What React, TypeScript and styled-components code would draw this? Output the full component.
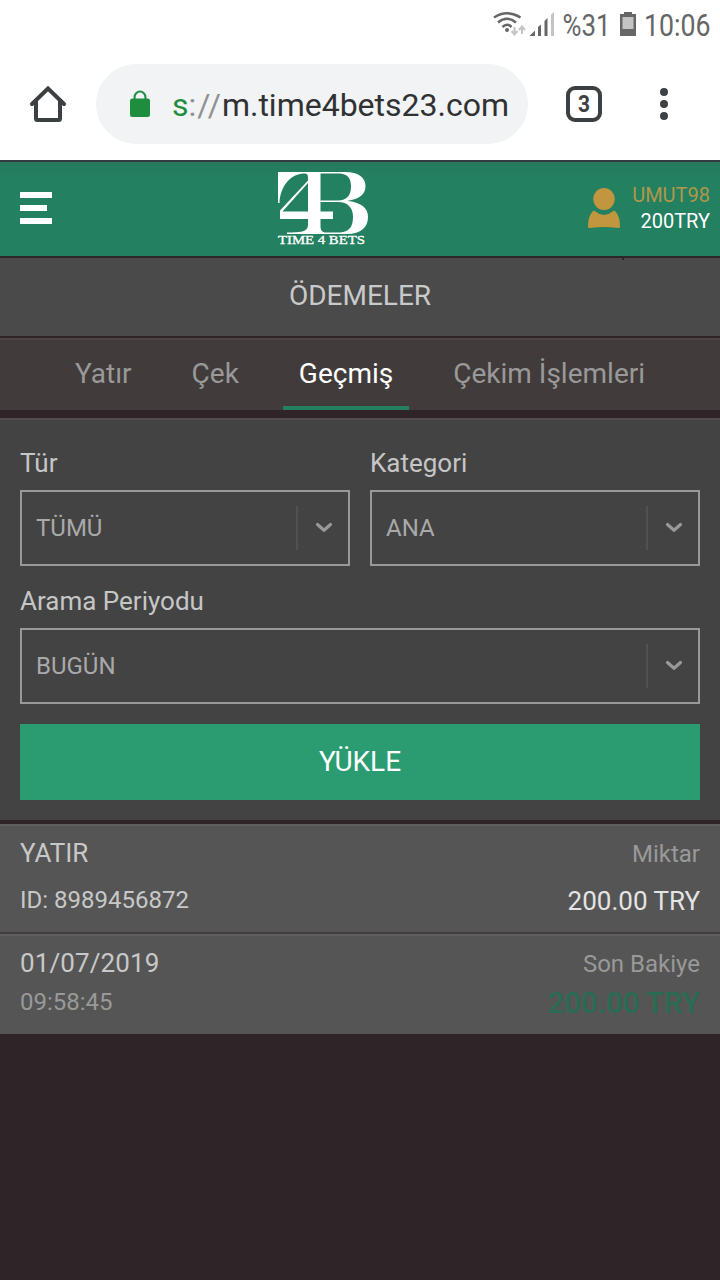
import React from 'react';
import styled, { createGlobalStyle } from 'styled-components';

const Global = createGlobalStyle`
  * { box-sizing: border-box; }
  body { margin: 0; background: #2f2529; font-family: Roboto, sans-serif; }
`;
const Screen = styled.div`width: 720px; height: 1280px; overflow: hidden; background: #2f2529;`;

const StatusBar = styled.div`
  height: 48px; background: #fff; color: #666;
  display: flex; justify-content: flex-end; padding-right: 10px;
  font-size: 31px; line-height: 50px;
`;
const StatusIcons = styled.svg`width: 62px; height: 48px; margin-right: 9px; flex: none;`;
const BatteryIcon = styled.svg`width: 16px; height: 48px; margin: 0 9px 0 10px; flex: none;`;
const Condensed = styled.svg<{ $w: number }>`width: ${p => p.$w}px; height: 48px; flex: none; overflow: visible;`;

const BrowserBar = styled.div`
  height: 112px; background: #fff; display: flex; align-items: center; padding: 0 0 0 28px;
`;
const HomeIcon = styled.svg`width: 40px; height: 40px; flex: none;`;
const UrlPill = styled.div`
  margin-left: 28px; width: 432px; height: 80px; border-radius: 40px; background: #f1f3f4;
  display: flex; align-items: center; padding-left: 34px; flex: none;
`;
const LockIcon = styled.svg`width: 20px; height: 28px; flex: none;`;
const UrlText = styled.div`
  margin-left: 22px; padding-top: 2px; font-size: 32px; line-height: 40px; color: #303133; white-space: pre;
`;
const Secure = styled.span`color: #1e8e3e;`;
const Scheme = styled.span`color: #8f9193; letter-spacing: 0.9px;`;
const TabCount = styled.div`
  margin-left: 38px; width: 36px; height: 36px; border: 4px solid #3c4043; border-radius: 9px;
  display: flex; align-items: center; justify-content: center; flex: none;
`;
const CountDigit = styled.svg`width: 14px; height: 20px; overflow: visible;`;
const MenuDots = styled.svg`width: 10px; height: 34px; margin-left: 57px; flex: none;`;

const Header = styled.header`
  height: 98px; border-top: 2px solid #353b42; border-bottom: 2px solid #2c282a;
  background: linear-gradient(#267a5d, #238061 16px);
  display: grid; grid-template-columns: 254px 100px 1fr; align-items: center; padding: 0 10px 2px 20px;
`;
const Burger = styled.div`display: flex; flex-direction: column; gap: 7px;`;
const BurgerLine = styled.div<{ $w: number }>`width: ${p => p.$w}px; height: 6px; background: #fff;`;
const Logo = styled.svg`width: 100px; height: 80px;`;
const User = styled.div`display: flex; justify-content: flex-end; align-items: center;`;
const UserIcon = styled.svg`width: 34px; height: 42px; margin-right: 11px;`;
const UserText = styled.div`text-align: right; font-size: 20px; line-height: 26px; color: #fff;`;
const UserName = styled.div`color: #b0974a;`;

const Title = styled.h1`
  margin: 0; height: 80px; background: #4a4a4a; border-bottom: 2px solid #2f2529; color: #c9c9c9;
  font-size: 28px; font-weight: 400; line-height: 75px; text-align: center; position: relative;
  &::before {
    content: ''; position: absolute; left: 622px; top: 0; width: 2px; height: 2px; background: #2c282a;
  }
`;
const Tabs = styled.nav`
  height: 72px; border-top: 2px solid #4b4645; background: #413c3b;
  display: flex; justify-content: center; gap: 28px;
`;
const Tab = styled.div<{ $active?: boolean }>`
  padding: 0 16px; font-size: 28px; line-height: 67px; height: 70px;
  color: ${p => (p.$active ? '#fff' : '#999')};
  border-bottom: ${p => (p.$active ? '4px solid #238061' : '0')};
`;

const Form = styled.section`
  margin-top: 8px; height: 402px; border-top: 2px solid #504c4d; background: #434343;
  padding: 26px 20px 0; display: flex; flex-direction: column;
`;
const FieldRow = styled.div`display: flex; gap: 20px; margin-bottom: 18px;`;
const Field = styled.div`flex: 1;`;
const Label = styled.div`font-size: 26px; line-height: 34px; height: 44px; color: #c6c6c6;`;
const Select = styled.div`
  height: 76px; border: 2px solid #999; display: flex; align-items: center;
  padding-left: 14px; color: #a9a9a9; font-size: 24px; line-height: 30px;
`;
const Value = styled.span`flex: 1;`;
const Divider = styled.span`width: 2px; height: 44px; background: #515151;`;
const Chevron = styled.svg`width: 50px; height: 40px;`;
const Submit = styled.div`
  height: 76px; margin-top: 2px; background: #2b9c72; color: #fff; font-size: 28px; line-height: 75px; text-align: center;
`;

const Record = styled.section`margin-top: 4px;`;
const RecordPart = styled.div<{ $h: number; $last?: boolean }>`
  height: ${p => p.$h}px; background: #555; border-top: 2px solid #5f5f5f;
  border-bottom: ${p => (p.$last ? '0' : '2px solid #413c3e')};
  padding: 10px 20px 0;
`;
const Line = styled.div<{ $h: number }>`
  display: flex; justify-content: space-between; align-items: center; height: ${p => p.$h}px;
`;
const Text = styled.span<{ $size: number; $color: string; $weight?: number; $spacing?: number }>`
  font-size: ${p => p.$size}px; color: ${p => p.$color}; font-weight: ${p => p.$weight ?? 400};
  letter-spacing: ${p => p.$spacing ?? 0}px; line-height: 34px;
  &:first-child { padding-bottom: 2px; }
`;

function SelectBox({ value }: { value: string }) {
  return (
    <Select>
      <Value>{value}</Value>
      <Divider />
      <Chevron viewBox="0 0 50 40" fill="none" stroke="#999" strokeWidth="3.2" strokeLinecap="round" strokeLinejoin="round">
        <path d="M19.5 16.5 L26 22.3 L32.5 16.5" />
      </Chevron>
    </Select>
  );
}

export default function App() {
  return (
    <Screen>
      <Global />
      <StatusBar>
        <StatusIcons viewBox="493 0 62 48">
          <g fill="none" stroke="#666" strokeWidth="2.5">
            <path d="M494 17.5 Q507 9 520.5 17.5" />
            <path d="M498 22.5 Q507 15 516 22.5" />
            <path d="M502.5 27 Q507 22.5 511.5 27" />
          </g>
          <circle cx="507" cy="30" r="2" fill="#666" />
          <g stroke="#c4c4c4" strokeWidth="2" fill="none">
            <path d="M514.5 27 V34 M511.5 31 L514.5 34.5 L517.5 31" />
            <path d="M522 34 V27 M519 30 L522 26.5 L525 30" />
          </g>
          <g fill="#666">
            <path d="M529.5 36 L535 30.5 V36 Z" />
            <path d="M538 27 L541 24.5 V36 H538 Z" />
            <path d="M544.5 21 L547.5 18 V36 H544.5 Z" />
          </g>
          <path d="M551 14.5 L554 12 V36 H551 Z" fill="#c4c4c4" />
        </StatusIcons>
        <Condensed $w={46}><text x="-1.5" y="35.5" fontSize="31" fill="#666" textLength="48" lengthAdjust="spacingAndGlyphs">%31</text></Condensed>
        <BatteryIcon viewBox="620 0 16 48">
          <path d="M620 14 H624 V12 H632 V14 H636 V36 H620 Z" fill="#666" />
          <path d="M622.5 17 H633.5 V29 H622.5 Z" fill="#c4c4c4" />
        </BatteryIcon>
        <Condensed $w={65}><text x="-1" y="35.5" fontSize="31" fill="#666" textLength="66.5" lengthAdjust="spacingAndGlyphs">10:06</text></Condensed>
      </StatusBar>

      <BrowserBar>
        <HomeIcon viewBox="28 84 40 40" fill="none" stroke="#3c4043" strokeWidth="4">
          <path d="M32 104 L48 88.5 L64 104" strokeLinecap="round" />
          <path d="M36 101 V118.5 Q36 120 37.5 120 H58.5 Q60 120 60 118.5 V101" />
        </HomeIcon>
        <UrlPill>
          <LockIcon viewBox="130 90 20 28">
            <path d="M134.6 100 V97 a5.4 5.4 0 0 1 10.8 0 V100" fill="none" stroke="#1e8e3e" strokeWidth="2" />
            <rect x="130" y="98.5" width="20" height="18.5" rx="2.5" fill="#1e8e3e" />
          </LockIcon>
          <UrlText><Secure>s</Secure><Scheme>://</Scheme>m.time4bets23.com</UrlText>
        </UrlPill>
        <TabCount>
          <CountDigit viewBox="0 0 14 20">
            <text x="1" y="18.2" fontSize="24" fontWeight="700" fill="#3c4043" textLength="12" lengthAdjust="spacingAndGlyphs">3</text>
          </CountDigit>
        </TabCount>
        <MenuDots viewBox="0 0 10 34" fill="#3c4043">
          <circle cx="5" cy="5" r="4" /><circle cx="5" cy="17" r="4" /><circle cx="5" cy="29" r="4" />
        </MenuDots>
      </BrowserBar>

      <Header>
        <Burger><BurgerLine $w={32} /><BurgerLine $w={27} /><BurgerLine $w={32} /></Burger>
        <Logo viewBox="274 168 100 80">
          <path fill="#fff" fillRule="evenodd" d="M278 172 H345 C359 172 365.5 178 365.5 186 C365.5 194 360 199 347 201 C361 202 368 208 368 217 C368 227 361 234 347 234 H287 V232.5 C300 232.5 308 232 308 225 V219 H280 V210.5 L308 180.5 V178 C308 174.5 307 173.5 304 173.5 C290 174 280 187 279.5 203 H278 Z M308 183 L282.5 211.5 H308 Z M320.5 173.5 H340 C348 174 351 179 351 186 C351 196 347 200 338 200.5 H320.5 Z M320.5 202 H338 C348 202 353 208 353 217 C353 227 349 232 340 232.5 H326 C322 232.5 320.5 230 320.5 226 V219 H333 V211.5 H320.5 Z" />
          <text x="278" y="244" fontFamily="Liberation Serif, serif" fontWeight="400" fontSize="12" fill="#fff" stroke="#fff" strokeWidth="0.3" textLength="87" lengthAdjust="spacingAndGlyphs">TIME 4 BETS</text>
        </Logo>
        <User>
          <UserIcon viewBox="587 186 34 42" fill="#c2963e">
            <ellipse cx="604" cy="198" rx="10.7" ry="11" />
            <path d="M593 210 Q594 209.5 595.5 210.5 Q604 217.5 612.5 210.5 Q614 209.5 615 210 Q620 215 620 226 Q620 227.3 618 227 Q604 225 590 227 Q588 227.3 588 226 Q588 215 593 210 Z" />
          </UserIcon>
          <UserText><UserName>UMUT98</UserName>200TRY</UserText>
        </User>
      </Header>

      <Title>ÖDEMELER</Title>
      <Tabs>
        <Tab>Yatır</Tab><Tab>Çek</Tab><Tab $active>Geçmiş</Tab><Tab>Çekim İşlemleri</Tab>
      </Tabs>

      <Form>
        <FieldRow>
          <Field><Label>Tür</Label><SelectBox value="TÜMÜ" /></Field>
          <Field><Label>Kategori</Label><SelectBox value="ANA" /></Field>
        </FieldRow>
        <FieldRow>
          <Field><Label>Arama Periyodu</Label><SelectBox value="BUGÜN" /></Field>
        </FieldRow>
        <Submit>YÜKLE</Submit>
      </Form>

      <Record>
        <RecordPart $h={110}>
          <Line $h={36}><Text $size={26} $color="#c8c8c8">YATIR</Text><Text $size={24} $color="#999">Miktar</Text></Line>
          <Line $h={58}><Text $size={24} $color="#c8c8c8">ID: 8989456872</Text><Text $size={26} $color="#e4e4e4">200.00 TRY</Text></Line>
        </RecordPart>
        <RecordPart $h={100} $last>
          <Line $h={36}><Text $size={26} $color="#c8c8c8" $spacing={0.12}>01/07/2019</Text><Text $size={24} $color="#999">Son Bakiye</Text></Line>
          <Line $h={42}><Text $size={24} $color="#999">09:58:45</Text><Text $size={29.5} $weight={500} $color="#2a6b54">200.00 TRY</Text></Line>
        </RecordPart>
      </Record>
    </Screen>
  );
}
